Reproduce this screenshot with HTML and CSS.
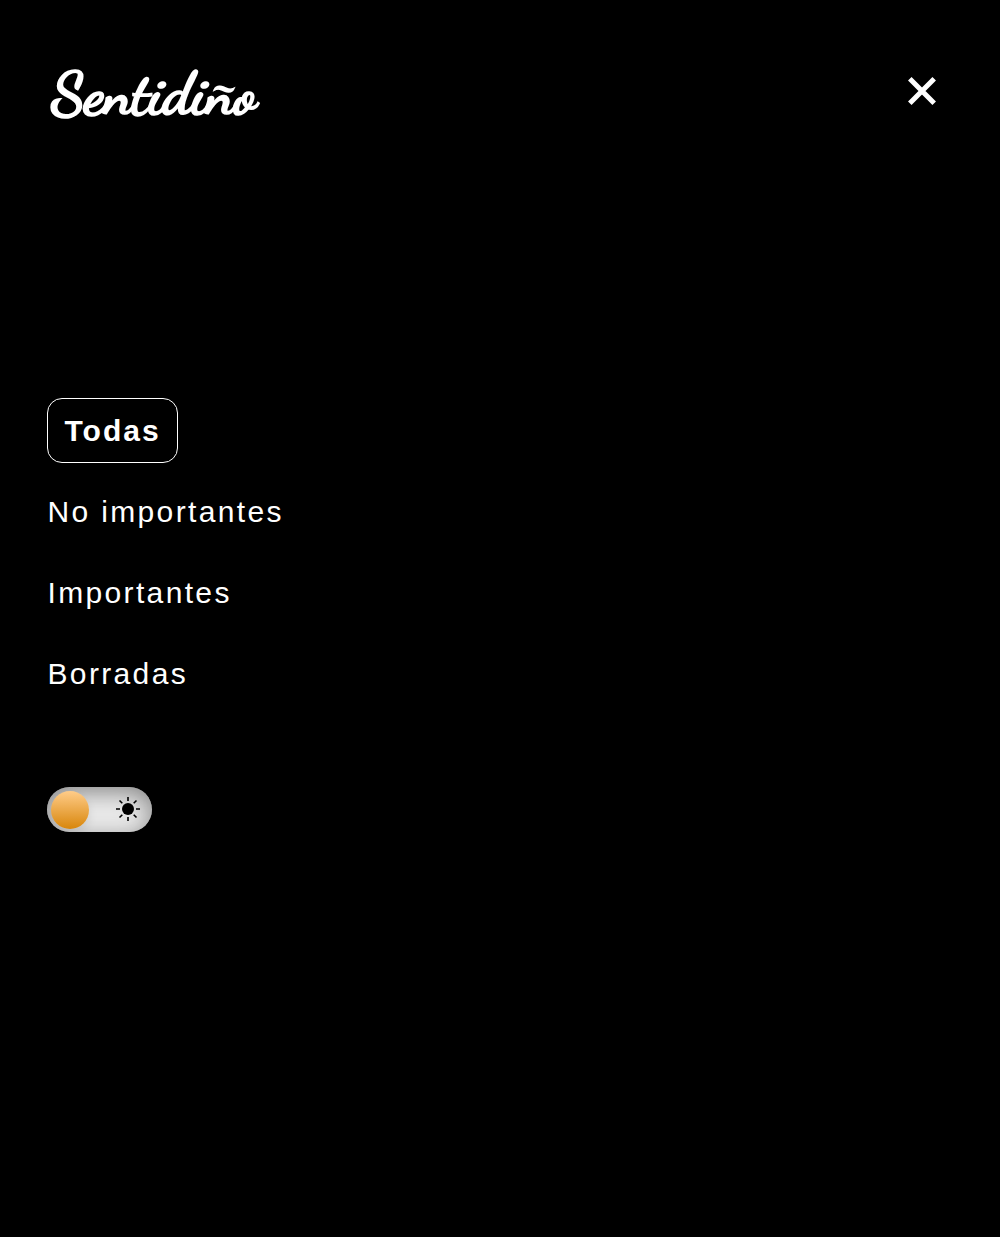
FILE: index.html
```html
<!DOCTYPE html>
<html lang="es">
<head>
<meta charset="utf-8">
<meta name="viewport" content="width=device-width, initial-scale=1">
<title>Sentidiño</title>
<link rel="stylesheet" href="styles.css">
</head>
<body>
<div class="panel">
  <header class="header">
    <h1 class="logo">Sentidiño</h1>
    <button class="close" type="button" aria-label="Cerrar">
      <svg width="30" height="30" viewBox="0 0 30 30"><path d="M2.8 2.8 27.2 27.2M27.2 2.8 2.8 27.2" fill="none" stroke="#fff" stroke-width="5"/></svg>
    </button>
  </header>
  <nav class="menu">
    <a class="item active">Todas</a>
    <a class="item">No importantes</a>
    <a class="item">Importantes</a>
    <a class="item">Borradas</a>
  </nav>
  <div class="switch">
    <span class="knob"></span>
    <svg class="sun" width="24" height="24" viewBox="0 0 24 24">
      <circle cx="12" cy="12" r="6"/>
      <path d="M12 0v4M12 20v4M0 12h4M20 12h4M3.5 3.5l2.8 2.8M17.7 17.7l2.8 2.8M3.5 20.5l2.8-2.8M17.7 6.3l2.8-2.8" fill="none" stroke="#000" stroke-width="1.6"/>
    </svg>
  </div>
</div>
</body>
</html>
```
FILE: styles.css
```css
* {
  box-sizing: border-box;
}

body {
  margin: 0;
  background: #000;
  color: #fff;
  font-family: Arial, "Liberation Sans", sans-serif;
}

.panel {
  display: flex;
  flex-direction: column;
  align-items: flex-start;
  min-height: 100vh;
  padding: 60px 63px 0 47px;
}

.header {
  display: flex;
  justify-content: space-between;
  align-items: flex-start;
  width: 100%;
  height: 338px;
}

.logo {
  margin: 0;
  padding-left: 4px;
  font: 700 60px/69px "Dancing Script", "Liberation Serif", serif;
  letter-spacing: -0.5px;
  -webkit-text-stroke: 1.7px #fff;
}

.close {
  display: flex;
  margin: 16px 0 0;
  padding: 0;
  border: 0;
  background: none;
}

.menu {
  display: flex;
  flex-direction: column;
  align-items: flex-start;
  gap: 16px;
}

.item {
  height: 65px;
  padding-left: 0.5px;
  font-size: 30px;
  line-height: 65px;
  letter-spacing: 2.35px;
}

.active {
  width: 131px;
  padding: 0 0 0 16.5px;
  border: 1px solid #fff;
  border-radius: 15px;
  font-weight: 700;
  line-height: 63px;
  letter-spacing: 2px;
}

.switch {
  display: flex;
  align-items: center;
  justify-content: space-between;
  width: 105px;
  height: 45px;
  margin-top: 81px;
  padding: 0 12px 0 4px;
  border-radius: 23px;
  background: #ebebeb;
  box-shadow: inset 0 5px 23px rgba(0, 0, 0, 0.45), inset 0 -5px 15px rgba(255, 255, 255, 0.4);
}

.knob {
  width: 38px;
  height: 38px;
  border-radius: 50%;
  background: linear-gradient(180deg, #ffcc89, #d8860b);
  box-shadow: 0 5px 10px rgba(0, 0, 0, 0.1);
}

.sun {
  margin-bottom: 1px;
}
```
